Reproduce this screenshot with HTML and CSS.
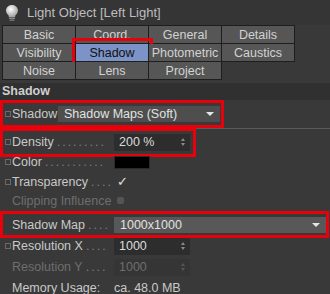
FILE: index.html
```html
<!DOCTYPE html>
<html lang="en">
<head>
    <meta charset="UTF-8">
    <title>Light Object</title>
    <link rel="stylesheet" href="styles.css">
</head>
<body>
    <div class="panel">
        <div class="title-bar">
            <svg class="bulb" width="14" height="18" viewBox="0 0 14 18">
                <defs>
                    <radialGradient id="glow" cx="0.4" cy="0.35" r="0.7">
                        <stop offset="0" stop-color="#ffffff"/>
                        <stop offset="1" stop-color="#9a9a9a"/>
                    </radialGradient>
                </defs>
                <path d="M7 1 C3.4 1 1 3.6 1 6.6 C1 9 2.6 10.2 3.6 11.6 L3.8 13 L10.2 13 L10.4 11.6 C11.4 10.2 13 9 13 6.6 C13 3.6 10.6 1 7 1 Z" fill="url(#glow)"/>
                <rect x="4" y="13.5" width="6" height="1.6" fill="#8a8a8a"/>
                <rect x="4.5" y="15.5" width="5" height="1.6" rx="0.8" fill="#6f6f6f"/>
            </svg>
            <span>Light Object [Left Light]</span>
        </div>

        <div class="tabs">
            <div class="tab">Basic</div>
            <div class="tab">Coord.</div>
            <div class="tab">General</div>
            <div class="tab">Details</div>
            <div class="tab">Visibility</div>
            <div class="tab active">Shadow</div>
            <div class="tab">Photometric</div>
            <div class="tab">Caustics</div>
            <div class="tab">Noise</div>
            <div class="tab">Lens</div>
            <div class="tab">Project</div>
        </div>

        <div class="section-title">Shadow</div>

        <div class="group">
            <div class="row mark mark-shadow">
                <i class="anim"></i>
                <span class="label short">Shadow</span>
                <div class="select wide">Shadow Maps (Soft)<b class="arrow"></b></div>
            </div>
        </div>

        <div class="row mark mark-density">
            <i class="anim"></i>
            <span class="label">Density<span class="dots">.........</span></span>
            <div class="field">200 %<b class="spin"></b></div>
        </div>

        <div class="row">
            <i class="anim"></i>
            <span class="label">Color<span class="dots">...........</span></span>
            <div class="swatch"></div>
        </div>

        <div class="row tight">
            <i class="anim"></i>
            <span class="label">Transparency<span class="dots">....</span></span>
            <span class="check">&#10003;</span>
        </div>

        <div class="row tight disabled">
            <i class="anim blank"></i>
            <span class="label">Clipping Influence</span>
            <span class="box"></span>
        </div>

        <div class="row tight mark mark-map">
            <i class="anim blank"></i>
            <span class="label">Shadow Map<span class="dots">....</span></span>
            <div class="select full">1000x1000<b class="arrow"></b></div>
        </div>

        <div class="row spaced">
            <i class="anim"></i>
            <span class="label">Resolution X<span class="dots">....</span></span>
            <div class="field">1000<b class="spin"></b></div>
        </div>

        <div class="row step disabled">
            <i class="anim blank"></i>
            <span class="label">Resolution Y<span class="dots">....</span></span>
            <div class="field">1000<b class="spin"></b></div>
        </div>

        <div class="row step">
            <i class="anim blank"></i>
            <span class="label">Memory Usage:</span>
            <span class="value">ca. 48.0 MB</span>
        </div>
    </div>
</body>
</html>
```

FILE: styles.css
```css
body {
    margin: 0;
    background-color: #393939;
    font-family: "Liberation Sans", Arial, sans-serif;
    font-size: 12.5px;
    color: #c9c9c9;
}
.panel {
    width: 330px;
    height: 294px;
    overflow: hidden;
}
.title-bar {
    display: flex;
    align-items: center;
    gap: 8px;
    height: 25px;
    padding-left: 5px;
    background-color: #353535;
    color: #bdbdbd;
    font-size: 13px;
}
.tabs {
    display: grid;
    grid-template-columns: repeat(4, 73px);
    grid-auto-rows: 18px;
    margin-left: 2px;
    border-top: 1px solid #1e1e1e;
    border-left: 1px solid #1e1e1e;
    width: max-content;
}
.tab {
    display: flex;
    justify-content: center;
    align-items: center;
    background-color: #565656;
    border-right: 1px solid #1e1e1e;
    border-bottom: 1px solid #1e1e1e;
    color: #d2d2d2;
    position: relative;
}
.tab.active {
    background-color: #7b93c6;
    color: #111;
}
.tab.active::after {
    content: "";
    position: absolute;
    top: -6px;
    left: -4px;
    right: -5px;
    bottom: -5px;
    border: 3px solid #e8000b;
}
.section-title {
    height: 17px;
    margin-top: 3px;
    padding-left: 2px;
    line-height: 17px;
    font-weight: bold;
    color: #cfcfcf;
    background-color: #303030;
}
.group {
    padding: 4px 0;
    border-bottom: 1px solid #5a5a5a;
}
.row {
    display: flex;
    align-items: center;
    height: 20px;
    padding-left: 5px;
    position: relative;
}
.row.tight {
    height: 19px;
}
.row.mark::after {
    content: "";
    position: absolute;
    top: -4px;
    bottom: -4px;
    left: 0;
    border: 3px solid #e8000b;
    pointer-events: none;
}
.mark-shadow::after {
    right: 106px;
}
.mark-density {
    margin-top: 3px;
}
.mark-density::after {
    right: 134px;
    bottom: -5px !important;
}
.mark-map {
    margin-top: 5px;
}
.mark-map::after {
    right: 1px;
}
.row.spaced {
    margin-top: 2px;
}
.row.step {
    margin-top: 1px;
}
.anim {
    width: 4px;
    height: 4px;
    border: 1px solid #6a6a6a;
    margin-right: 1px;
    flex: none;
}
.anim.blank {
    border-color: transparent;
}
.label {
    width: 102px;
    white-space: nowrap;
    overflow: hidden;
    flex: none;
}
.label.short {
    width: 46px;
}
.dots {
    color: #7c7c7c;
    letter-spacing: 2px;
    margin-left: 3px;
}
.select {
    position: relative;
    height: 16px;
    line-height: 16px;
    padding-left: 6px;
    background-color: #4e4e4e;
    color: #e2e2e2;
    box-sizing: border-box;
}
.select.wide {
    width: 162px;
}
.select.full {
    width: 212px;
    background-color: #585858;
}
.arrow {
    position: absolute;
    right: 6px;
    top: 6px;
    border-left: 4px solid transparent;
    border-right: 4px solid transparent;
    border-top: 4px solid #e6e6e6;
}
.field {
    position: relative;
    width: 76px;
    height: 17px;
    line-height: 17px;
    padding-left: 5px;
    background-color: #2d2d2d;
    color: #dcdcdc;
    box-sizing: border-box;
}
.spin::before,
.spin::after {
    content: "";
    position: absolute;
    right: 5px;
    border-left: 2px solid transparent;
    border-right: 2px solid transparent;
}
.spin::before {
    top: 4px;
    border-bottom: 3px solid #8a8a8a;
}
.spin::after {
    top: 9px;
    border-top: 3px solid #8a8a8a;
}
.swatch {
    width: 34px;
    height: 11px;
    background-color: #000;
    border: 1px solid #2a2a2a;
}
.check {
    margin-left: 3px;
    color: #e0e0e0;
    font-family: "DejaVu Sans", sans-serif;
    font-size: 13px;
    font-style: italic;
}
.box {
    margin-left: 3px;
    width: 7px;
    height: 7px;
    border-radius: 2px;
    background-color: #555;
}
.row.disabled .label,
.row.disabled .field {
    color: #6e6e6e;
}
.row.disabled .field {
    background-color: #353535;
}
.row.disabled .spin::before {
    border-bottom-color: #575757;
}
.row.disabled .spin::after {
    border-top-color: #575757;
}
.value {
    color: #c9c9c9;
}
```
